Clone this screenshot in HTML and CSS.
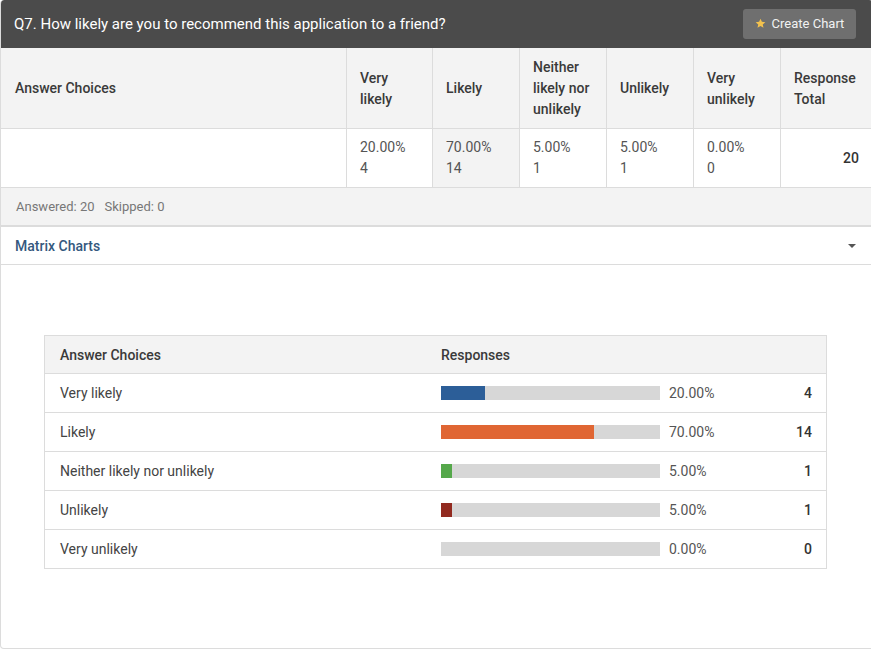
FILE: index.html
```html
<!DOCTYPE html>
<html>
<head>
<meta charset="utf-8">
<link rel="stylesheet" href="styles.css">
</head>
<body>
<div class="card">
  <div class="q-header">
    <div class="q-title">Q7. How likely are you to recommend this application to a friend?</div>
    <button class="btn-chart">
      <svg class="star" viewBox="0 0 24 24" width="11" height="11"><path d="M12 1.5l3.1 6.9 7.4.7-5.6 5 1.7 7.4L12 17.6l-6.6 3.9 1.7-7.4-5.6-5 7.4-.7z" fill="#f2c14e"/></svg>
      Create Chart
    </button>
  </div>

  <div class="grid grid-head">
    <div class="cell first">Answer Choices</div>
    <div class="cell">Very<br>likely</div>
    <div class="cell">Likely</div>
    <div class="cell">Neither<br>likely nor<br>unlikely</div>
    <div class="cell">Unlikely</div>
    <div class="cell">Very<br>unlikely</div>
    <div class="cell last">Response<br>Total</div>
  </div>
  <div class="grid grid-data">
    <div class="cell first"></div>
    <div class="cell">20.00%<br>4</div>
    <div class="cell hl">70.00%<br>14</div>
    <div class="cell">5.00%<br>1</div>
    <div class="cell">5.00%<br>1</div>
    <div class="cell">0.00%<br>0</div>
    <div class="cell last total">20</div>
  </div>

  <div class="stats"><span>Answered: 20</span><span>Skipped: 0</span></div>

  <div class="matrix-bar">
    <span class="matrix-title">Matrix Charts</span>
    <span class="caret"></span>
  </div>

  <div class="chart-area">
    <div class="chart">
      <div class="crow chead">
        <div class="clabel">Answer Choices</div>
        <div class="cresp">Responses</div>
      </div>
      <div class="crow">
        <div class="clabel">Very likely</div>
        <div class="track"><div class="fill blue" style="width:20%"></div></div>
        <div class="pct">20.00%</div>
        <div class="cnt">4</div>
      </div>
      <div class="crow">
        <div class="clabel">Likely</div>
        <div class="track"><div class="fill orange" style="width:70%"></div></div>
        <div class="pct">70.00%</div>
        <div class="cnt">14</div>
      </div>
      <div class="crow">
        <div class="clabel">Neither likely nor unlikely</div>
        <div class="track"><div class="fill green" style="width:5%"></div></div>
        <div class="pct">5.00%</div>
        <div class="cnt">1</div>
      </div>
      <div class="crow">
        <div class="clabel">Unlikely</div>
        <div class="track"><div class="fill red" style="width:5%"></div></div>
        <div class="pct">5.00%</div>
        <div class="cnt">1</div>
      </div>
      <div class="crow">
        <div class="clabel">Very unlikely</div>
        <div class="track"><div class="fill" style="width:0%"></div></div>
        <div class="pct">0.00%</div>
        <div class="cnt">0</div>
      </div>
    </div>
  </div>
</div>
</body>
</html>
```

FILE: styles.css
```css
html, body {
  margin: 0;
  padding: 0;
  background: #fff;
  overflow: hidden;
}
body {
  font-family: Roboto, "Liberation Sans", Arial, sans-serif;
  color: #333;
}
.card {
  width: 872px;
  height: 648px;
  border: 1px solid #dcdcdc;
  border-top: none;
  border-radius: 4px;
  overflow: hidden;
  box-sizing: content-box;
}
.q-header {
  height: 48px;
  background: #4b4b4b;
  display: flex;
  align-items: center;
  justify-content: space-between;
  padding: 0 17px 0 14px;
  margin-left: -1px;
  border-radius: 4px 4px 0 0;
}
.q-title {
  color: #fff;
  font-size: 15px;
}
.btn-chart {
  height: 30px;
  width: 113px;
  background: #6f6f6f;
  border: none;
  border-radius: 3px;
  color: #f2f2f2;
  font-family: inherit;
  font-size: 13px;
  display: flex;
  align-items: center;
  justify-content: center;
  gap: 6px;
  padding: 0;
  margin-top: -1px;
}
.star { display: block; margin-top: -1px; }

.grid {
  display: grid;
  grid-template-columns: 345px 86px 87px 87px 87px 87px 1fr;
  border-bottom: 1px solid #dcdcdc;
}
.grid-head {
  background: #f3f3f3;
  min-height: 80px;
}
.grid-head .cell {
  font-weight: 500;
  color: #3a3a3a;
  font-size: 14px;
}
.cell {
  border-left: 1px solid #dcdcdc;
  padding: 8px 13px;
  line-height: 21px;
  display: flex;
  align-items: center;
  font-size: 14px;
}
.cell.first {
  border-left: none;
  padding-left: 14px;
}
.grid-head .cell { padding-top: 9px; padding-bottom: 8px; }
.grid-data .cell {
  color: #555;
  align-items: flex-start;
  padding-top: 8px;
  padding-bottom: 8px;
  height: 42px;
}
.grid-data .cell.hl { background: #f3f3f3; }
.grid-data .cell.total {
  justify-content: flex-end;
  align-items: center;
  font-weight: 500;
  color: #333;
  padding-right: 14px;
}

.stats {
  height: 37px;
  background: #f3f3f3;
  border-bottom: 2px solid #dcdcdc;
  display: flex;
  align-items: center;
  gap: 10px;
  padding-left: 15px;
  font-size: 13px;
  color: #777;
}

.matrix-bar {
  height: 37px;
  border-bottom: 1px solid #dcdcdc;
  display: flex;
  align-items: center;
  justify-content: space-between;
  padding: 0 16px 0 14px;
  margin-right: 1px;
}
.matrix-title {
  color: #34587e;
  font-size: 14px;
  font-weight: 500;
}
.caret {
  width: 0;
  height: 0;
  border-left: 4px solid transparent;
  border-right: 4px solid transparent;
  border-top: 4px solid #555;
}

.chart-area {
  padding: 70px 0 0 43px;
}
.chart {
  width: 781px;
  border: 1px solid #dcdcdc;
}
.crow {
  display: grid;
  grid-template-columns: 396px 219px 80px 1fr;
  align-items: center;
  height: 38px;
  border-top: 1px solid #dcdcdc;
  font-size: 14px;
}
.crow.chead {
  border-top: none;
  background: #f3f3f3;
  height: 37px;
  font-weight: 500;
  font-size: 14px;
  color: #3a3a3a;
}
.clabel {
  padding-left: 15px;
  color: #444;
}
.chead .clabel, .chead .cresp { color: #3a3a3a; }
.track {
  height: 14px;
  background: #d7d7d7;
  position: relative;
}
.fill {
  height: 100%;
}
.fill.blue { background: #2c5e98; }
.fill.orange { background: #e06633; }
.fill.green { background: #55a84b; }
.fill.red { background: #922a20; }
.pct {
  padding-left: 9px;
  color: #555;
}
.cnt {
  text-align: right;
  padding-right: 14px;
  font-weight: 500;
  color: #333;
}
```
